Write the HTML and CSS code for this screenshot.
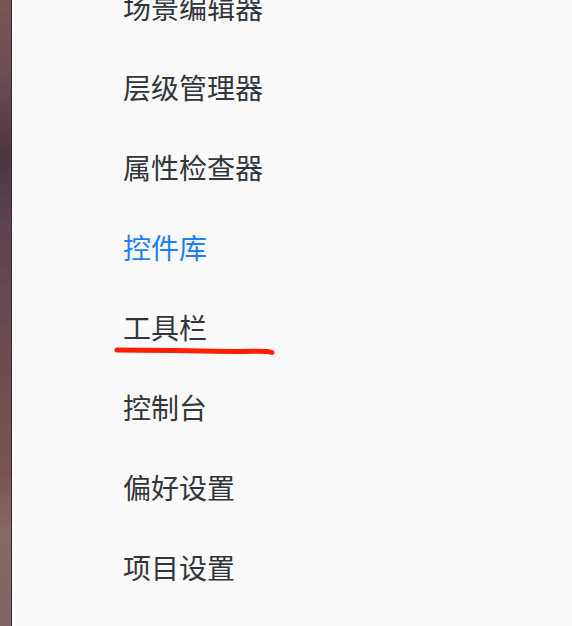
FILE: index.html
```html
<!DOCTYPE html>
<html lang="zh-CN">
<head>
  <meta charset="UTF-8" />
  <meta name="viewport" content="width=device-width, initial-scale=1" />
  <title>菜单</title>
  <link rel="stylesheet" href="styles.css">
</head>
<body>
  <div class="screen">
    <div class="backdrop"></div>
    <div class="panel">
      <ul class="menu">
        <li>场景编辑器</li>
        <li>层级管理器</li>
        <li>属性检查器</li>
        <li class="active">控件库</li>
        <li class="marked">
          工具栏
          <!-- hand-drawn red underline -->
          <svg class="mark" width="170" height="16" viewBox="0 0 170 16">
            <path d="M5 6 C 40 6, 90 7, 130 7.5 C 145 7.5, 154 6.5, 160 8.5" fill="none" stroke="#ff1e00" stroke-width="5" stroke-linecap="round" />
          </svg>
        </li>
        <li>控制台</li>
        <li>偏好设置</li>
        <li>项目设置</li>
      </ul>
    </div>
  </div>
</body>
</html>
```

FILE: styles.css
```css
* {
  margin: 0;
  padding: 0;
  box-sizing: border-box;
}
body {
  width: 572px;
  height: 626px;
  overflow: hidden;
  font-family: 'Noto Sans CJK SC', 'Noto Sans', sans-serif;
}

.screen {
  display: flex;
  height: 626px;
}

/* blurred wallpaper peeking on the left */
.backdrop {
  width: 11px;
  flex-shrink: 0;
  background: linear-gradient(180deg, #7b5457 0%, #6e4d55 12%, #4a3640 25%, #5a4450 35%, #6e4b52 55%, #7a5252 75%, #886868 85%, #836466 100%);
}

.panel {
  flex: 1;
  background: #f9f9f9;
  border-left: 1px solid #3a2a2c;
  padding-left: 111px;
}

.menu {
  list-style: none;
  margin-top: -33px;
}
.menu li {
  height: 80px;
  line-height: 80px;
  font-size: 28px;
  color: #32363b;
  position: relative;
}
.menu li.active {
  color: #1f7ff0;
}

.mark {
  position: absolute;
  left: -11px;
  top: 57px;
}
```
